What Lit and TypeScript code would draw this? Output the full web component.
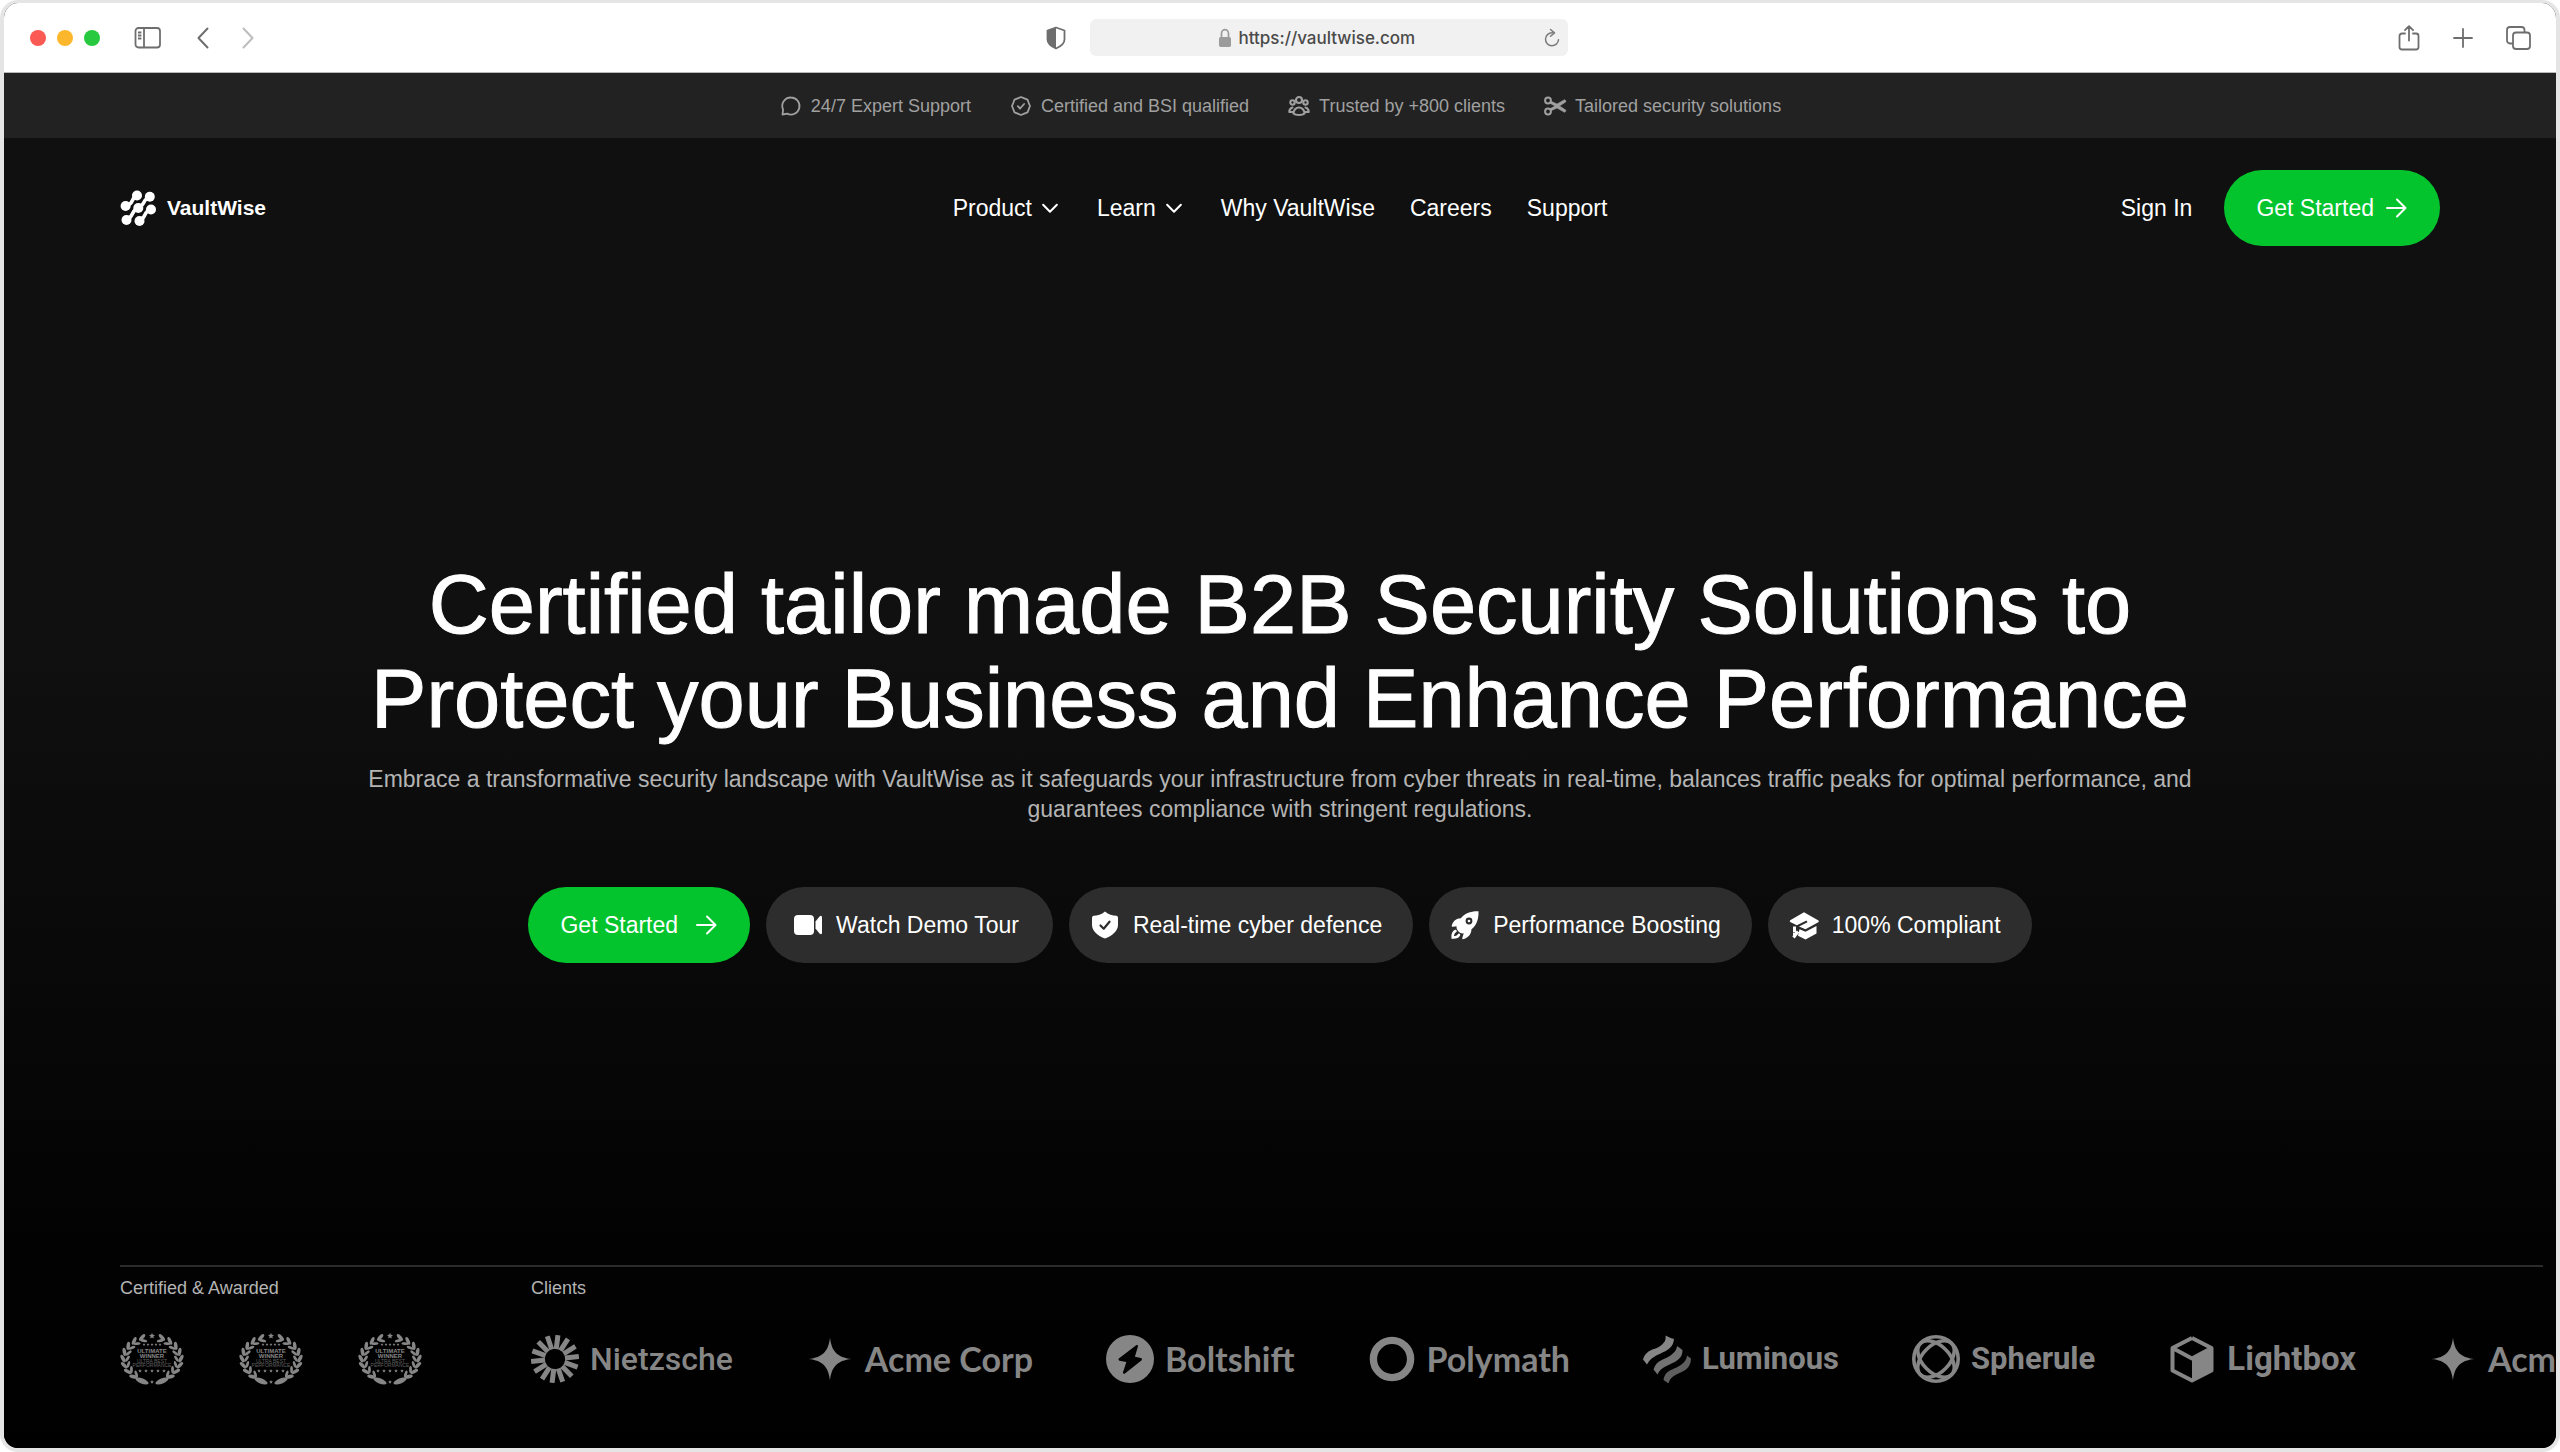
import { LitElement, html, svg, css, nothing, type TemplateResult, type SVGTemplateResult } from "lit";
import { customElement, property } from "lit/decorators.js";

type Glyph = { box: string; art: SVGTemplateResult };

const rays = Array.from({ length: 14 }, (_, i) => 7 + (i * 360) / 14);

const glyphs: Record<string, Glyph> = {
  sidebar: {
    box: "0 0 28 24",
    art: svg`<g fill="none" stroke="currentColor" stroke-width="1.8"><rect x="1.5" y="2" width="24.5" height="19.5" rx="3"/><path d="M10 2v19.500M4 6.500h3.400M4 9.500h3.400M4 12.500h3.400"/></g>`,
  },
  back: { box: "0 0 12 22", art: svg`<path d="M10.500 1.500L1.500 11l9 9.500" fill="none" stroke="currentColor" stroke-width="2" stroke-linecap="round" stroke-linejoin="round"/>` },
  forward: { box: "0 0 12 22", art: svg`<path d="M1.500 1.500l9 9.500-9 9.500" fill="none" stroke="currentColor" stroke-width="2" stroke-linecap="round" stroke-linejoin="round"/>` },
  shield: {
    box: "0 0 20 24",
    art: svg`<path d="M10 1.500L18.500 4.500v9c0 4-4 7-8.500 9-4.500-2-8.500-5-8.500-9v-9z" fill="none" stroke="currentColor" stroke-width="1.800" stroke-linejoin="round"/><path d="M10 1.500v21c-4.500-2-8.500-5-8.500-9v-9z" fill="currentColor"/>`,
  },
  lock: {
    box: "0 0 14 20",
    art: svg`<rect x="1" y="9" width="12" height="10" rx="1.800" fill="currentColor"/><path d="M3.500 9.500V5.500a3.500 3.800 0 0 1 7 0v4" fill="none" stroke="currentColor" stroke-width="1.700"/>`,
  },
  reload: {
    box: "0 0 16 20",
    art: svg`<path d="M8.500 4.800H8a6.500 6.500 0 1 0 6.500 7" fill="none" stroke="currentColor" stroke-width="1.500" stroke-linecap="round"/><path d="M6.500 1.500l4 3.400-4 3.400" fill="none" stroke="currentColor" stroke-width="1.500" stroke-linecap="round" stroke-linejoin="round"/>`,
  },
  share: {
    box: "0 0 22 26",
    art: svg`<g fill="none" stroke="currentColor" stroke-width="1.800" stroke-linecap="round" stroke-linejoin="round"><path d="M7 8.500H4a2.500 2.500 0 0 0-2.500 2.500v11A2.500 2.500 0 0 0 4 24.500h14a2.500 2.500 0 0 0 2.500-2.500V11A2.500 2.500 0 0 0 18 8.500h-3M11 15.500V1.500M7 5.200l4-4 4 4"/></g>`,
  },
  plus: { box: "0 0 20 20", art: svg`<path d="M10 1v18M1 10h18" stroke="currentColor" stroke-width="1.800" stroke-linecap="round"/>` },
  tabs: {
    box: "0 0 25 24",
    art: svg`<g fill="none" stroke="currentColor" stroke-width="1.800"><rect x="7" y="6.500" width="17" height="16.500" rx="3"/><path d="M7 17.500H4a3 3 0 0 1-3-3V4a3 3 0 0 1 3-3h11.500a3 3 0 0 1 3 3v2.500"/></g>`,
  },
  chat: {
    box: "0 0 24 24",
    art: svg`<path d="M12 3.500a8.500 8.500 0 1 1-3.800 16.100L3.500 20.500l.6-4.900A8.500 8.500 0 0 1 12 3.500z" fill="none" stroke="currentColor" stroke-width="1.800" stroke-linejoin="round"/>`,
  },
  seal: {
    box: "0 0 24 24",
    art: svg`<g fill="none" stroke="currentColor" stroke-width="1.800" stroke-linejoin="round" stroke-linecap="round"><path d="M12 3l3.300 1.300 3.200 1.300 1.200 3.200L21 12l-1.300 3.300-1.200 3.100-3.200 1.300L12 21l-3.300-1.300-3.200-1.300-1.200-3.100L3 12l1.300-3.200 1.200-3.200 3.200-1.300z"/><path d="M8.800 12.200l2.300 2.300 4-4.500"/></g>`,
  },
  people: {
    box: "0 0 24 24",
    art: svg`<g fill="none" stroke="currentColor" stroke-width="2.100" stroke-linecap="round" stroke-linejoin="round"><circle cx="12" cy="6" r="3"/><circle cx="5.500" cy="8.500" r="2.200"/><circle cx="18.500" cy="8.500" r="2.200"/><path d="M6.500 19.500a5.500 6 0 0 1 11 0c-2 2-9 2-11 0zM5.500 13.500C3.500 14 2.300 15.500 2.300 18h3M18.500 13.500c2 .5 3.200 2 3.200 4.500h-3"/></g>`,
  },
  scissors: {
    box: "0 0 24 24",
    art: svg`<g fill="none" stroke="currentColor" stroke-width="2" stroke-linecap="round" stroke-linejoin="round"><circle cx="5" cy="6.500" r="2.900"/><circle cx="5" cy="17.500" r="2.900"/></g><path d="M7.500 7L14 10 21.500 5.700c1 .3 1.600 1.200 1.300 2.200L16.500 12l6.300 4.100c.3 1-.3 1.900-1.300 2.200L14 14 7.500 17l-1-2 5.500-3-5.500-3z" fill="currentColor" stroke="currentColor" stroke-width=".6"/>`,
  },
  chevron: { box: "0 0 24 24", art: svg`<path d="M4.500 8.500l7.500 7.500 7.500-7.500" fill="none" stroke="currentColor" stroke-width="2.200" stroke-linecap="round" stroke-linejoin="round"/>` },
  arrow: { box: "0 0 24 24", art: svg`<path d="M3 12h18.500M13 3.500l8.500 8.500-8.500 8.500" fill="none" stroke="currentColor" stroke-width="2" stroke-linecap="round" stroke-linejoin="round"/>` },
  camera: {
    box: "0 0 32 32",
    art: svg`<rect x="2" y="6" width="20" height="20" rx="4" fill="currentColor"/><path d="M23.500 12.500L27.500 7.500Q30 5.500 30 8.500v15q0 3-2.500 1L23.500 19.500z" fill="currentColor"/>`,
  },
  guard: {
    box: "0 0 32 32",
    art: svg`<path d="M16 2.500c3.500 3 7.500 4 11.500 4.300a2 2 0 0 1 1.500 2V16c0 6-6 11-13 13.500C9 27 3 22 3 16V8.800a2 2 0 0 1 1.500-2C8.500 6.500 12.500 5.500 16 2.500z" fill="currentColor"/><path d="M11.500 16.500l3.200 3.200 5.800-7" fill="none" stroke="#2d2d2d" stroke-width="2.200" stroke-linecap="round" stroke-linejoin="round"/>`,
  },
  rocket: {
    box: "0 0 32 32",
    art: svg`<path d="M29.500 2.200C21.500 2 15.500 4.500 11.800 9.300 7 9.500 4.200 12 2.800 16.500c-.3 1 .4 1.500 1.200 1.300L7.600 17.200c-.4 2 .5 3.800 1.900 5.200s3.200 2.300 5.200 1.900l-1.400 4.600c-.3.900.5 1.500 1.300 1.200 5-1.800 7.600-4.900 7.900-9.900C27.500 16.500 29.800 10.200 29.500 2.200z" fill="currentColor"/><circle cx="20" cy="12" r="3.400" fill="#2d2d2d"/><circle cx="20" cy="12" r="1.300" fill="currentColor"/><path d="M6.500 22c-2 1-3 3.500-2.800 6.500 3 .2 5.200-.6 6.300-2.600" fill="none" stroke="currentColor" stroke-width="2.600" stroke-linecap="round"/>`,
  },
  graduate: {
    box: "0 0 32 32",
    art: svg`<path d="M16 3.200L30.500 11.600Q31.300 12.500 30.300 13.300L17.500 20.300 11 17.500l8.500-4.300-1-1.800-9.700 4.800-6.600-3.200q-1-.8 0-1.700z" fill="currentColor"/><path d="M11.500 20.300L17.500 22.800 28.500 17V24.500L17.500 30.500 10 26.800z" fill="currentColor"/><path d="M6.500 17.500v6M6.500 24v2.500M10 22.500L5.500 28.500" stroke="currentColor" stroke-width="3" fill="none"/>`,
  },
  brand: {
    box: "0 0 36 36",
    art: svg`<g fill="currentColor"><circle cx="17" cy="5.500" r="5"/><circle cx="29.800" cy="6.700" r="5"/><circle cx="5.600" cy="16" r="5"/><circle cx="18.300" cy="18" r="5"/><circle cx="31" cy="19.500" r="5"/><circle cx="6.500" cy="30" r="5"/><circle cx="19.500" cy="31" r="5"/></g><g fill="none" stroke="currentColor" stroke-width="3.600"><path d="M6 15.500C14 15 11 7 17 5.500M29.800 7C23 8 25 16 18.300 18 11 20 14 27 6.500 30M31 19.500C23.500 20.500 26 29 19.500 31"/></g>`,
  },
  nietzsche: {
    box: "0 0 48 48",
    art: svg`<g stroke="currentColor" stroke-width="5">${rays.map((a) => svg`<path d="M24 14V0" transform="rotate(${a} 24 24)"/>`)}</g>`,
  },
  acme: { box: "0 0 48 48", art: svg`<path d="M24 2.500C25.500 16 31 22.500 45.500 24 31 25.500 25.500 32 24 45.500 22.500 32 17 25.500 2.500 24 17 22.500 22.500 16 24 2.500z" fill="currentColor"/>` },
  boltshift: {
    box: "0 0 48 48",
    art: svg`<circle cx="24" cy="24" r="24" fill="currentColor"/><path d="M30.500 10L12.800 23.500q-1 1.500.6 2.200l7 1.300-3.500 10.500q0 1.800 1.700 1.200L35.700 25.200q1-1.600-.8-2.200l-6-1.200L32 11.200q.2-1.600-1.500-1.200z" fill="#020202"/>`,
  },
  polymath: { box: "0 0 48 48", art: svg`<circle cx="24" cy="24" r="18.600" fill="none" stroke="currentColor" stroke-width="7.400"/>` },
  luminous: {
    box: "0 0 48 48",
    art: svg`<g fill="currentColor"><path d="M22.500 0.500Q27 3 31 4C30.500 9 29 11.500 25 14.500 18 19.500 9 20 4 29.500L0 24.500C4 13 12 15.500 18 10.500 22 7 23 5 22.500.5z"/><path opacity=".85" d="M34 11L39.500 15C39.500 20 38 22.500 34 25.500 27 30.500 18 31 14.500 39.500L10.500 34.500C14 24 21 25.500 27.500 20.500 32 17 33.500 15 34 11z"/><path opacity=".7" d="M44 20.500L48 23.500C48 28 46.500 31.500 43 34.500 37 39 27.500 39.500 25.500 48.500L20.500 45C22.500 34 30 35.500 37 30.500 41.500 27.500 43.500 25 44 20.500z"/></g>`,
  },
  spherule: {
    box: "0 0 48 48",
    art: svg`<g fill="none" stroke="currentColor"><circle cx="24" cy="24" r="22.200" stroke-width="3.600"/><ellipse cx="24" cy="24" rx="22" ry="13.500" stroke-width="3.600" transform="rotate(45 24 24)"/><ellipse cx="24" cy="24" rx="22" ry="13.500" stroke-width="3.600" transform="rotate(-45 24 24)"/></g>`,
  },
  lightbox: {
    box: "0 0 48 48",
    art: svg`<path d="M24 3L43.500 13V35.500L24 45.500 4.500 35.500V13L24 23.500 43.500 13M4.500 13L24 3" fill="none" stroke="currentColor" stroke-width="4" stroke-linejoin="round"/><path d="M24 23.500L43.500 13V35.500L24 46z" fill="currentColor"/>`,
  },
};

const icon = (name: string, cls = ""): TemplateResult => html`
  <svg class="icon ${cls}" viewBox=${glyphs[name].box} aria-hidden="true">${glyphs[name].art}</svg>
`;

const leafAngles = [20, 38, 55, 72, 89, 106, 123, 140];

/** One half of the wreath: leaf pairs that climb from the bottom to the top star. */
const branch = (side: 1 | -1): SVGTemplateResult => svg`
  <g transform=${side === 1 ? "" : "translate(64 0) scale(-1 1)"}>
    ${leafAngles.map((a) => {
      const r = (a * Math.PI) / 180;
      const x = 32 + 26 * Math.sin(r);
      const y = 26 - 21 * Math.cos(r);
      const outX = x + 3 * Math.sin(r);
      const outY = y - 2 * Math.cos(r);
      const inX = x - 1.5 * Math.sin(r);
      const inY = y + 1.5 * Math.cos(r);
      return svg`
        <ellipse cx=${outX} cy=${outY} rx="1.800" ry="4.200" transform="rotate(${a - 62} ${outX} ${outY})"/>
        <ellipse cx=${inX} cy=${inY} rx="1.400" ry="3.600" transform="rotate(${a - 122} ${inX} ${inY})"/>`;
    })}
    <ellipse cx="42" cy="48" rx="7" ry="2.600" transform="rotate(-22 42 48)"/>
  </g>`;

const star = (cx: number, cy: number, r: number): SVGTemplateResult => {
  const points = Array.from({ length: 10 }, (_, i) => {
    const rad = i % 2 ? r * 0.45 : r;
    const a = (i * Math.PI) / 5 - Math.PI / 2;
    return `${cx + rad * Math.cos(a)},${cy + rad * Math.sin(a)}`;
  }).join(" ");
  return svg`<polygon points=${points}/>`;
};

@customElement("award-badge")
export class AwardBadge extends LitElement {
  static styles = css`
    :host { display: block; color: #868686; }
    .badge { display: block; width: 64px; height: 52px; font-family: "Liberation Sans", Arial, sans-serif; }
    .strong { font-size: 6px; font-weight: 700; }
    .soft { font-size: 5px; opacity: 0.7; }
  `;

  render() {
    return html`
      <svg class="badge" viewBox="0 0 64 52" fill="currentColor" role="img" aria-label="Ultimate winner, ultra best performance">
        ${branch(1)}${branch(-1)}${star(32, 3, 3.2)}${star(32, 49, 2)}
        ${[-8, -4, 0, 4, 8].map((d) => star(32 + d, 11.5, 1.5))}
        ${[-12, -6, 0, 6, 12].map((d) => star(32 + d, 38, 1.9))}
        <g text-anchor="middle">
          <text class="strong" x="32" y="20">ULTIMATE</text>
          <text class="strong" x="32" y="25">WINNER</text>
          <text class="soft" x="32" y="30">ULTRA BEST</text>
          <text class="soft" x="32" y="34">PERFORMANCE</text>
        </g>
      </svg>
    `;
  }
}

@customElement("client-logo")
export class ClientLogo extends LitElement {
  @property() name = "";
  @property() mark = "";

  static styles = css`
    :host { display: flex; flex: none; align-items: center; gap: 11px; color: #868686; }
    .icon { width: 48px; height: 48px; flex: none; }
    .name { font-family: Roboto, sans-serif; font-size: 32px; line-height: 40px; font-weight: 700; white-space: nowrap; }
    .nietzsche { font-weight: 500; }
    .luminous, .spherule { font-size: 31px; }
    .acme, .boltshift, .polymath { font-family: Lato, sans-serif; font-size: 34px; }
    .lightbox { font-size: 33px; }
  `;

  render() {
    return html`${icon(this.mark)}<span class="name ${this.mark}">${this.name}</span>`;
  }
}

const perks = [
  { mark: "chat", label: "24/7 Expert Support" },
  { mark: "seal", label: "Certified and BSI qualified" },
  { mark: "people", label: "Trusted by +800 clients" },
  { mark: "scissors", label: "Tailored security solutions" },
];

const links = [
  { label: "Product", menu: true },
  { label: "Learn", menu: true },
  { label: "Why VaultWise", menu: false },
  { label: "Careers", menu: false },
  { label: "Support", menu: false },
];

const features = [
  { mark: "guard", label: "Real-time cyber defence" },
  { mark: "rocket", label: "Performance Boosting" },
  { mark: "graduate", label: "100% Compliant" },
];

const clients = [
  { mark: "nietzsche", name: "Nietzsche" },
  { mark: "acme", name: "Acme Corp" },
  { mark: "boltshift", name: "Boltshift" },
  { mark: "polymath", name: "Polymath" },
  { mark: "luminous", name: "Luminous" },
  { mark: "spherule", name: "Spherule" },
  { mark: "lightbox", name: "Lightbox" },
  { mark: "acme", name: "Acme Corp" },
];

@customElement("app-root")
export class AppRoot extends LitElement {
  static styles = css`
    :host {
      display: block;
      background: #ffffff;
      color: #ffffff;
      font-family: "Liberation Sans", Arial, sans-serif;
      font-size: 23px;
      line-height: 30px;
    }
    * { box-sizing: border-box; }
    button, input { font: inherit; color: inherit; border: 0; padding: 0; margin: 0; background: none; }
    button { cursor: pointer; }
    a { color: inherit; text-decoration: none; }
    .icon { display: block; flex: none; width: 24px; height: 24px; }

    .window {
      display: flex;
      flex-direction: column;
      min-height: 100vh;
      border: 4px solid #e5e5e5;
      border-top-width: 3px;
      border-radius: 18px;
      overflow: hidden;
      background: #000000;
    }

    .toolbar {
      display: grid;
      grid-template-columns: 1fr auto 1fr;
      align-items: center;
      height: 70px;
      padding: 0 25px 0 26px;
      background: #ffffff;
      border-bottom: 1px solid #b8b8b8;
      color: #6e6e6e;
    }
    .tools { display: flex; align-items: center; }
    .lights { display: flex; gap: 11px; margin-right: 34px; }
    .light { width: 16px; height: 16px; border-radius: 50%; }
    .close { background: #fb5a54; }
    .minimise { background: #fcb72c; }
    .zoom { background: #27c93f; }
    .sidebar { width: 28px; height: 24px; }
    .history { display: flex; gap: 33px; margin-left: 35px; }
    .step { width: 12px; height: 22px; }
    .idle { color: #bdbdbd; }
    .address { display: flex; align-items: center; gap: 24px; padding-left: 52px; }
    .shield { width: 20px; height: 24px; }
    .field {
      display: flex;
      align-items: center;
      justify-content: flex-end;
      width: 478px;
      height: 37px;
      padding: 0 8px;
      border-radius: 6px;
      background: #f1f1f1;
    }
    .lock { width: 14px; height: 20px; color: #9b9b9b; margin-right: 7px; }
    .url { width: 184px; font-family: Inter, sans-serif; font-size: 17px; font-weight: 500; color: #4a4a4a; outline: none; }
    .refresh { margin-left: 121px; }
    .reload { width: 16px; height: 20px; color: #7c7c7c; }
    .actions { display: flex; align-items: center; justify-content: flex-end; gap: 33px; }
    .share { width: 22px; height: 26px; }
    .plus { width: 20px; height: 20px; }
    .tabs { width: 25px; height: 24px; }

    .perks {
      display: flex;
      justify-content: center;
      align-items: center;
      gap: 38px;
      height: 65px;
      margin: 0;
      padding: 0;
      list-style: none;
      background: #222222;
      color: #a0a0a0;
      font-size: 18px;
    }
    .perk { display: flex; align-items: center; gap: 8px; }

    .page {
      flex: 1;
      display: flex;
      flex-direction: column;
      background: linear-gradient(180deg, #101010 0%, #101010 38%, #020202 86%, #000000 100%);
    }
    .header {
      display: grid;
      grid-template-columns: 1fr auto 1fr;
      align-items: center;
      padding: 32px 116px;
    }
    .brand { display: flex; align-items: center; gap: 11px; justify-self: start; font-size: 21px; font-weight: 700; }
    .emblem { width: 36px; height: 36px; }
    .nav { display: flex; gap: 35px; }
    .link { display: flex; align-items: center; gap: 6px; }
    .account { display: flex; align-items: center; justify-content: flex-end; gap: 32px; }
    .menu-mark { padding: 1px; }

    .pill {
      display: flex;
      align-items: center;
      gap: 12px;
      height: 76px;
      padding: 0 31px 0 20px;
      border-radius: 38px;
      background: #2d2d2d;
      white-space: nowrap;
    }
    .pill .icon { width: 32px; height: 32px; }
    .pill.tour { padding: 0 34px 0 26px; }
    .pill.cta { background: #03c42d; gap: 10px; padding: 0 32px; }
    .pill.cta .icon { width: 24px; height: 24px; }
    .pill.roomy { gap: 16px; }

    .hero {
      flex: 1;
      display: flex;
      flex-direction: column;
      align-items: center;
      justify-content: center;
      padding: 0 120px 22px;
      text-align: center;
    }
    .title { margin: 0; max-width: 1880px; font-size: 83px; line-height: 94px; font-weight: 400; -webkit-text-stroke: 1px currentColor; }
    .lead { margin: 18px 0 0; max-width: 1880px; color: #b4b4b4; }
    .choices { display: flex; gap: 16px; margin-top: 63px; }

    .footer {
      display: flex;
      gap: 109px;
      margin: 0 13px 0 116px;
      padding: 6px 0 0;
      height: 183px;
      border-top: 2px solid #2b2b2b;
    }
    .caption { margin: 0; color: #b4b4b4; font-size: 18px; font-weight: 400; }
    .row { display: flex; align-items: center; height: 48px; margin-top: 32px; }
    .awards { gap: 55px; }
    .proof, .roster { flex: none; }
    .roster { width: 0; }
    .clients { gap: 73px; }
  `;

  render() {
    return html`
      <div class="window">
        <div class="toolbar">
          <div class="tools">
            <div class="lights">
              <button class="light close" aria-label="Close"></button>
              <button class="light minimise" aria-label="Minimise"></button>
              <button class="light zoom" aria-label="Zoom"></button>
            </div>
            <button aria-label="Sidebar">${icon("sidebar", "sidebar")}</button>
            <div class="history">
              <button aria-label="Back">${icon("back", "step")}</button>
              <button class="idle" aria-label="Forward">${icon("forward", "step")}</button>
            </div>
          </div>
          <div class="address">
            <button aria-label="Privacy report">${icon("shield", "shield")}</button>
            <label class="field">
              ${icon("lock", "lock")}
              <input class="url" type="text" aria-label="Address" .value=${"https://vaultwise.com"} />
              <button class="refresh" aria-label="Reload">${icon("reload", "reload")}</button>
            </label>
          </div>
          <div class="actions">
            <button aria-label="Share">${icon("share", "share")}</button>
            <button aria-label="New tab">${icon("plus", "plus")}</button>
            <button aria-label="Show tabs">${icon("tabs", "tabs")}</button>
          </div>
        </div>

        <ul class="perks">
          ${perks.map((p) => html`<li class="perk">${icon(p.mark)}<span>${p.label}</span></li>`)}
        </ul>

        <div class="page">
          <header class="header">
            <a class="brand" href="#home">${icon("brand", "emblem")}<span>VaultWise</span></a>
            <nav class="nav">
              ${links.map((l) => html`<a class="link" href="#"><span>${l.label}</span>${l.menu ? icon("chevron", "menu-mark") : nothing}</a>`)}
            </nav>
            <div class="account">
              <a href="#sign-in">Sign In</a>
              <button class="pill cta"><span>Get Started</span>${icon("arrow")}</button>
            </div>
          </header>

          <main class="hero">
            <h1 class="title">Certified tailor made B2B Security Solutions to Protect your Business and Enhance Performance</h1>
            <p class="lead">
              Embrace a transformative security landscape with VaultWise as it safeguards your infrastructure from cyber
              threats in real-time, balances traffic peaks for optimal performance, and guarantees compliance with
              stringent regulations.
            </p>
            <div class="choices">
              <button class="pill cta roomy"><span>Get Started</span>${icon("arrow")}</button>
              <button class="pill tour">${icon("camera")}<span>Watch Demo Tour</span></button>
              ${features.map((f) => html`<button class="pill">${icon(f.mark)}<span>${f.label}</span></button>`)}
            </div>
          </main>

          <footer class="footer">
            <section class="proof">
              <h2 class="caption">Certified &amp; Awarded</h2>
              <div class="row awards">${[1, 2, 3].map(() => html`<award-badge></award-badge>`)}</div>
            </section>
            <section class="roster">
              <h2 class="caption">Clients</h2>
              <div class="row clients">
                ${clients.map((c) => html`<client-logo mark=${c.mark} name=${c.name}></client-logo>`)}
              </div>
            </section>
          </footer>
        </div>
      </div>
    `;
  }
}
